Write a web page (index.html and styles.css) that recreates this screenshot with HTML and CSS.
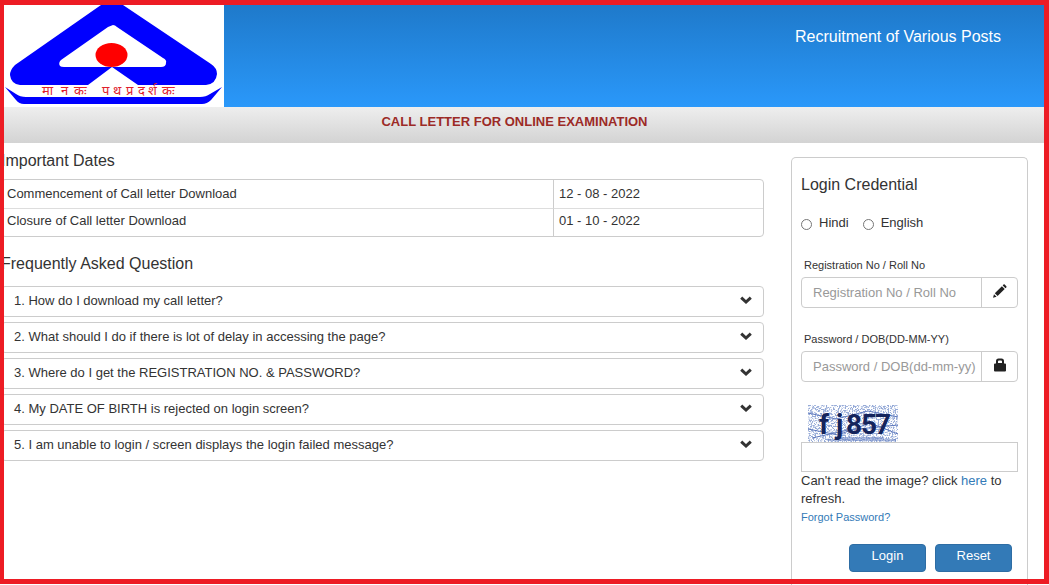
FILE: index.html
```html
<!DOCTYPE html>
<html lang="en">
<head>
<meta charset="utf-8">
<meta name="viewport" content="width=device-width, initial-scale=1">
<title>Call Letter for Online Examination</title>
<link rel="stylesheet" href="styles.css">
</head>
<body>
<div class="page">
  <header class="header">
    <svg class="logo" viewBox="0 0 224 107" role="img" aria-label="Organisation logo">
      <rect width="224" height="107" fill="#fff"/>
      <path fill="#00f" fill-rule="evenodd" d="M101 5H123L211 64Q217 68 217 74Q216 84 206 85H138L112 67L88 85H20Q11 84 10 75Q10 70 15 65ZM113 25L108 27L61 60Q58 63 60 66Q61 67 64 67H161Q166 67 166 63Q167 60 163 58L117 27Q115 25 113 25Z"/>
      <ellipse cx="111.500" cy="55" rx="16" ry="12" fill="#f00"/>
      <path fill="#00f" d="M5 87L16 94Q20 97 26 97H200Q206 97 210 94L222 87L211 100Q207 104 202 104H24Q19 104 16 100Z"/>
      <text class="logo-text" y="95"><tspan x="42">मा</tspan><tspan x="61">न</tspan><tspan x="74">कः</tspan></text>
      <text class="logo-text" y="95"><tspan x="102">प</tspan><tspan x="113">थ</tspan><tspan x="126">प्र</tspan><tspan x="138">द</tspan><tspan x="148">र्श</tspan><tspan x="162">कः</tspan></text>
    </svg>
    <p class="header-title">Recruitment of Various Posts</p>
  </header>
  <h1 class="banner">CALL LETTER FOR ONLINE EXAMINATION</h1>

  <main class="main">
    <div class="info">
      <h2 class="heading">Important Dates</h2>
      <table class="dates">
        <tbody>
          <tr><th scope="row">Commencement of Call letter Download</th><td>12 - 08 - 2022</td></tr>
          <tr><th scope="row">Closure of Call letter Download</th><td>01 - 10 - 2022</td></tr>
        </tbody>
      </table>
      <h2 class="heading">Frequently Asked Question</h2>
      <div class="faq">
        <button class="faq-item" type="button">1. How do I download my call letter?<svg class="chevron" viewBox="0 0 12 8" aria-hidden="true"><path d="M1.200 1.700L6 6L10.800 1.700"/></svg></button>
        <button class="faq-item" type="button">2. What should I do if there is lot of delay in accessing the page?<svg class="chevron" viewBox="0 0 12 8" aria-hidden="true"><path d="M1.200 1.700L6 6L10.800 1.700"/></svg></button>
        <button class="faq-item" type="button">3. Where do I get the REGISTRATION NO. &amp; PASSWORD?<svg class="chevron" viewBox="0 0 12 8" aria-hidden="true"><path d="M1.200 1.700L6 6L10.800 1.700"/></svg></button>
        <button class="faq-item" type="button">4. My DATE OF BIRTH is rejected on login screen?<svg class="chevron" viewBox="0 0 12 8" aria-hidden="true"><path d="M1.200 1.700L6 6L10.800 1.700"/></svg></button>
        <button class="faq-item" type="button">5. I am unable to login / screen displays the login failed message?<svg class="chevron" viewBox="0 0 12 8" aria-hidden="true"><path d="M1.200 1.700L6 6L10.800 1.700"/></svg></button>
      </div>
    </div>

    <form class="login">
      <h2 class="heading">Login Credential</h2>
      <div class="languages">
        <label class="language"><input class="radio" type="radio" name="language" value="hi">Hindi</label>
        <label class="language"><input class="radio" type="radio" name="language" value="en">English</label>
      </div>
      <div class="field">
        <label class="field-label" for="registration">Registration No / Roll No</label>
        <div class="input-group">
          <input class="input" id="registration" type="text" placeholder="Registration No / Roll No">
          <span class="addon"><svg class="icon" viewBox="0 0 14 14" aria-hidden="true"><path d="M0 13.800L1 10.200L3.600 12.800ZM1.800 9.300L8.900 2.200L11.700 5L4.600 12.100ZM9.700 1.400L10.500 .6Q11.100 0 11.700 .6L13.300 2.200Q13.900 2.800 13.300 3.400L12.500 4.200Z"/></svg></span>
        </div>
      </div>
      <div class="field">
        <label class="field-label" for="password">Password / DOB(DD-MM-YY)</label>
        <div class="input-group">
          <input class="input" id="password" type="password" placeholder="Password / DOB(dd-mm-yy)">
          <span class="addon"><svg class="icon" viewBox="0 0 14 14" aria-hidden="true"><path fill-rule="evenodd" d="M3 5.500V3Q3 .5 5.500 .5H8.500Q11 .5 11 3V5.500H12Q13 5.500 13 6.500V12.500Q13 13.500 12 13.500H2Q1 13.500 1 12.500V6.500Q1 5.500 2 5.500ZM5 5H9V3.500Q9 2.500 8 2.500H6Q5 2.500 5 3.500Z"/></svg></span>
        </div>
      </div>
      <div class="captcha">
        <svg class="captcha-image" viewBox="0 0 90 37" role="img" aria-label="Captcha">
          <defs>
            <filter id="speckle" x="0" y="0" width="1" height="1">
              <feTurbulence type="fractalNoise" baseFrequency="0.7" numOctaves="2" seed="8"/>
              <feColorMatrix values="0 0 0 0 .3  0 0 0 0 .4  0 0 0 0 .68  6 0 0 0 -2.700"/>
            </filter>
          </defs>
          <rect width="90" height="37" filter="url(#speckle)"/>
          <path class="scratch" d="M0 8L28 14L60 6L90 12M0 24L30 30L62 18L90 29M4 33L40 25L90 20M20 35H88M28 33H76"/>
          <text class="captcha-text" x="11 28 38 53 67" y="29">fj857</text>
        </svg>
        <input class="captcha-input" type="text" aria-label="Captcha text">
      </div>
      <p class="hint">Can't read the image? click <a href="#">here</a> to refresh.</p>
      <a class="forgot" href="#">Forgot Password?</a>
      <div class="actions">
        <button class="button" type="submit">Login</button>
        <button class="button" type="reset">Reset</button>
      </div>
    </form>
  </main>
</div>
<div class="frame"></div>
</body>
</html>
```

FILE: styles.css
```css
* {
  box-sizing: border-box;
}

body {
  margin: 0;
  background: #fff;
  color: #333;
  font: 13px/18px "Liberation Sans", Arial, sans-serif;
}

h1, h2, p {
  margin: 0;
}

a {
  color: #337ab7;
  text-decoration: none;
}

button, input {
  font: inherit;
  color: inherit;
}

.page {
  display: flex;
  flex-direction: column;
  min-height: 100vh;
}

/* Red border drawn over the whole window */
.frame {
  position: fixed;
  inset: 0 0 1px;
  border: 5px solid #ed1c24;
  border-left-width: 4px;
  pointer-events: none;
}

.header {
  display: flex;
  justify-content: space-between;
  background: linear-gradient(#1e78c8, #2a98fa);
}

.logo {
  display: block;
  width: 224px;
  height: 107px;
}

.logo-text {
  fill: #e0202c;
  font: 13px "Noto Sans", "Noto Sans Devanagari", sans-serif;
}

.header-title {
  padding: 27px 48px 0 0;
  color: #fff;
  font-size: 16px;
  line-height: 20px;
}

.banner {
  padding: 6px 20px 12px 0;
  background: linear-gradient(#eee, #d3d3d3);
  color: #9c2a26;
  font-size: 13px;
  line-height: 18px;
  text-align: center;
}

.main {
  flex: 1;
  display: grid;
  grid-template-columns: minmax(0, 1fr) 237px;
  gap: 27px;
  padding: 0 21px 0 1px;
}

.info {
  padding-top: 8px;
}

.heading {
  font-size: 16px;
  font-weight: 400;
  line-height: 20px;
}

.dates {
  width: 100%;
  margin: 8px 0 17px;
  border: 1px solid #ccc;
  border-radius: 4px;
  border-spacing: 0;
}

.dates th,
.dates td {
  padding: 5px;
  font-weight: 400;
  text-align: left;
}

.dates td {
  width: 210px;
  border-left: 1px solid #ccc;
}

.dates tr + tr th,
.dates tr + tr td {
  padding-top: 3px;
  padding-bottom: 6px;
  border-top: 1px solid #ddd;
}

.faq {
  display: grid;
  gap: 5px;
  margin-top: 12px;
}

.faq-item {
  display: flex;
  justify-content: space-between;
  align-items: center;
  padding: 5px 11px 6px 12px;
  border: 1px solid #ccc;
  border-radius: 4px;
  background: #fff;
  text-align: left;
}

.chevron {
  flex: none;
  width: 12px;
  height: 8px;
  margin-bottom: 2px;
  fill: none;
  stroke: #333;
  stroke-width: 3;
}

.login {
  margin-top: 14px;
  padding: 17px 9px 12px;
  border: 1px solid #ccc;
  border-bottom: 0;
  border-radius: 5px 5px 0 0;
}

.languages {
  display: flex;
  gap: 14px;
  margin: 19px 0 25px;
}

.language {
  display: flex;
  align-items: center;
  gap: 7px;
}

.radio {
  appearance: none;
  width: 11px;
  height: 11px;
  margin: 3px 0 0;
  border: 1px solid #767676;
  border-radius: 50%;
  background: #fff;
}

.radio:checked {
  background: #337ab7;
}

.field {
  margin-bottom: 23px;
}

.field-label {
  display: block;
  padding: 0 3px 4px;
  font-size: 11px;
  line-height: 16px;
}

.input-group {
  display: flex;
  height: 31px;
  border: 1px solid #ccc;
  border-radius: 4px;
}

.input {
  flex: 1;
  min-width: 0;
  padding: 0 0 0 11px;
  border: 0;
  background: none;
}

.input::placeholder {
  color: #999;
  opacity: 1;
}

.addon {
  display: flex;
  justify-content: center;
  align-items: center;
  width: 36px;
  padding-bottom: 3px;
  border-left: 1px solid #ccc;
}

.icon {
  width: 14px;
  height: 14px;
  fill: #222;
}

.captcha-image {
  display: block;
  width: 90px;
  height: 37px;
  margin-left: 7px;
}

.scratch {
  fill: none;
  stroke: #5d78bd;
}

.captcha-text {
  fill: #14245c;
  font: bold 28px Roboto, sans-serif;
}

.captcha-input {
  display: block;
  width: 100%;
  height: 30px;
  border: 1px solid #ccc;
  background: #fff;
}

.forgot {
  display: block;
  font-size: 11px;
}

.actions {
  display: flex;
  justify-content: flex-end;
  gap: 9px;
  margin-top: 18px;
  padding-right: 6px;
}

.button {
  width: 77px;
  padding: 2px 0 6px;
  border: 1px solid #2e6da4;
  border-radius: 4px;
  background: #337ab7;
  color: #fff;
}
```
